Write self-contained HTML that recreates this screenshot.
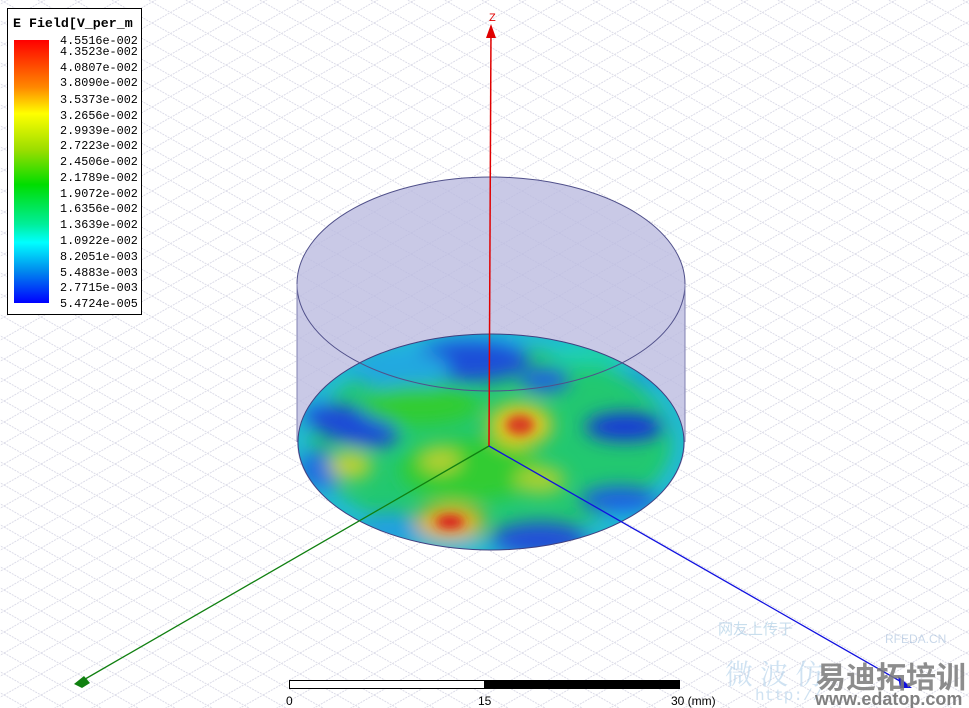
<!DOCTYPE html>
<html><head><meta charset="utf-8"><style>
html,body{margin:0;padding:0;background:#fff;}
body{width:969px;height:708px;position:relative;overflow:hidden;font-family:"Liberation Sans",sans-serif;}
</style></head><body>
<svg width="969" height="708" viewBox="0 0 969 708" xmlns="http://www.w3.org/2000/svg" style="position:absolute;left:0;top:0">
<defs>
<pattern id="grid" width="37" height="21" patternUnits="userSpaceOnUse" x="4" y="2">
<path d="M0 0L37 21M0 21L37 0" stroke="#dcdce8" stroke-width="1" stroke-dasharray="2 1" fill="none"/>
</pattern>
<clipPath id="disc"><ellipse cx="491" cy="442" rx="193" ry="108"/></clipPath>
<filter id="bl" x="-20%" y="-20%" width="140%" height="140%"><feGaussianBlur stdDeviation="9"/></filter>
<filter id="bl2"><feGaussianBlur stdDeviation="5"/></filter>
<linearGradient id="leg" x1="0" y1="0" x2="0" y2="1">
<stop offset="0" stop-color="#ff0000"/><stop offset="0.18" stop-color="#ff8800"/>
<stop offset="0.28" stop-color="#ffff00"/><stop offset="0.42" stop-color="#99dd00"/>
<stop offset="0.55" stop-color="#00dd00"/><stop offset="0.7" stop-color="#00ee99"/>
<stop offset="0.77" stop-color="#00ffff"/><stop offset="0.88" stop-color="#0088ee"/>
<stop offset="1" stop-color="#0000ff"/></linearGradient>
</defs>
<rect width="969" height="708" fill="url(#grid)"/>
<path d="M297 284 L297 442 A194 108 0 0 0 685 442 L685 284 A194 107 0 0 0 297 284Z" fill="#bcbce0" fill-opacity="0.8"/>
<g clip-path="url(#disc)">
<rect x="290" y="330" width="400" height="230" fill="#22c870"/>
<g filter="url(#bl)">
<ellipse cx="491" cy="442" rx="193" ry="108" fill="none" stroke="#20b8e0" stroke-width="22"/>
<ellipse cx="470" cy="360" rx="60" ry="22" fill="#1f4fd8"/>
<ellipse cx="400" cy="370" rx="50" ry="20" fill="#20a8e0"/>
<ellipse cx="545" cy="380" rx="25" ry="12" fill="#2060e0"/>
<ellipse cx="590" cy="355" rx="40" ry="12" fill="#1fd0b0"/>
<ellipse cx="650" cy="375" rx="22" ry="10" fill="#1fa0e0"/>
<ellipse cx="350" cy="425" rx="50" ry="18" fill="#1b4ad8" transform="rotate(15 350 425)"/>
<ellipse cx="320" cy="470" rx="25" ry="20" fill="#1a70e0"/>
<ellipse cx="625" cy="427" rx="40" ry="14" fill="#1535d8"/>
<ellipse cx="620" cy="500" rx="40" ry="14" fill="#1a60e0"/>
<ellipse cx="540" cy="540" rx="50" ry="18" fill="#2050d8"/>
<ellipse cx="390" cy="530" rx="30" ry="18" fill="#20a0e0"/>
<ellipse cx="470" cy="470" rx="70" ry="30" fill="#30cc30"/>
<ellipse cx="420" cy="405" rx="60" ry="20" fill="#33cc33"/>
<ellipse cx="520" cy="425" rx="32" ry="22" fill="#e0c820"/>
<ellipse cx="450" cy="522" rx="35" ry="18" fill="#e0b020"/>
<ellipse cx="350" cy="465" rx="22" ry="14" fill="#c0d030"/>
<ellipse cx="540" cy="480" rx="25" ry="14" fill="#a8d030"/>
<ellipse cx="440" cy="460" rx="20" ry="12" fill="#b8d030"/>
</g>
<g filter="url(#bl2)">
<ellipse cx="520" cy="425" rx="14" ry="10" fill="#d84020"/>
<ellipse cx="450" cy="522" rx="14" ry="7" fill="#d82020"/>
</g>
</g>
<ellipse cx="491" cy="442" rx="193" ry="108" fill="none" stroke="#404080" stroke-width="1"/>
<ellipse cx="491" cy="284" rx="194" ry="107" fill="none" stroke="#50508a" stroke-width="1"/>
<path d="M297 284V442M685 284V442" stroke="#8080b0" stroke-width="1"/>
<line x1="489" y1="446" x2="491" y2="28" stroke="#e00000" stroke-width="1.5"/>
<path d="M486 38L491 24L496 38Z" fill="#e00000"/>
<text x="489" y="21" font-size="11" fill="#e00000">Z</text>
<line x1="489" y1="446" x2="80" y2="682" stroke="#108010" stroke-width="1.3"/>
<path d="M74 684L84 676L90 683L82 688Z" fill="#108010"/>
<line x1="489" y1="446" x2="905" y2="684" stroke="#1010e0" stroke-width="1.3"/>
<path d="M898 676L912 688L900 688Z" fill="#1010e0"/>
<rect x="7.5" y="8.5" width="134" height="306" fill="#fff" stroke="#000"/>
<text x="13" y="27" font-family="Liberation Mono,monospace" font-weight="bold" font-size="13.3">E Field[V_per_m</text>
<rect x="14" y="40" width="35" height="263" fill="url(#leg)"/>
<g font-family="Liberation Mono,monospace" font-size="11.8" fill="#000">
<text x="60" y="44">4.5516e-002</text><text x="60" y="55">4.3523e-002</text>
<text x="60" y="71">4.0807e-002</text><text x="60" y="86">3.8090e-002</text>
<text x="60" y="103">3.5373e-002</text><text x="60" y="119">3.2656e-002</text>
<text x="60" y="134">2.9939e-002</text><text x="60" y="149">2.7223e-002</text>
<text x="60" y="165">2.4506e-002</text><text x="60" y="181">2.1789e-002</text>
<text x="60" y="197">1.9072e-002</text><text x="60" y="212">1.6356e-002</text>
<text x="60" y="228">1.3639e-002</text><text x="60" y="244">1.0922e-002</text>
<text x="60" y="260">8.2051e-003</text><text x="60" y="276">5.4883e-003</text>
<text x="60" y="291">2.7715e-003</text><text x="60" y="307">5.4724e-005</text>
</g>
<rect x="289.5" y="680.5" width="195" height="8" fill="#fff" stroke="#000"/>
<rect x="484" y="680" width="196" height="9" fill="#000"/>
<g font-size="12" fill="#000">
<text x="286" y="705">0</text><text x="478" y="705">15</text><text x="671" y="705">30 (mm)</text>
</g>
<g opacity="0.55">
<text x="718" y="634" font-size="15" fill="#9cc4e0" font-family="Noto Sans CJK SC,sans-serif">网友上传于</text>
<text x="725" y="684" font-size="28" fill="#a8cce8" font-family="Noto Serif CJK SC,serif">微 波 仿</text>
<text x="755" y="700" font-size="16" fill="#a8cce8" font-family="Liberation Mono,monospace">http://</text>
<text x="885" y="643" font-size="12" fill="#9cb8d8">RFEDA.CN</text>
</g>
<text x="816" y="688" font-size="30" font-weight="bold" fill="#7a7a7a" opacity="0.85" font-family="Noto Sans CJK SC,sans-serif">易迪拓培训</text>
<text x="815" y="705" font-size="18" font-weight="bold" fill="#6a6a6a" opacity="0.85">www.edatop.com</text>
</svg>
</body></html>
